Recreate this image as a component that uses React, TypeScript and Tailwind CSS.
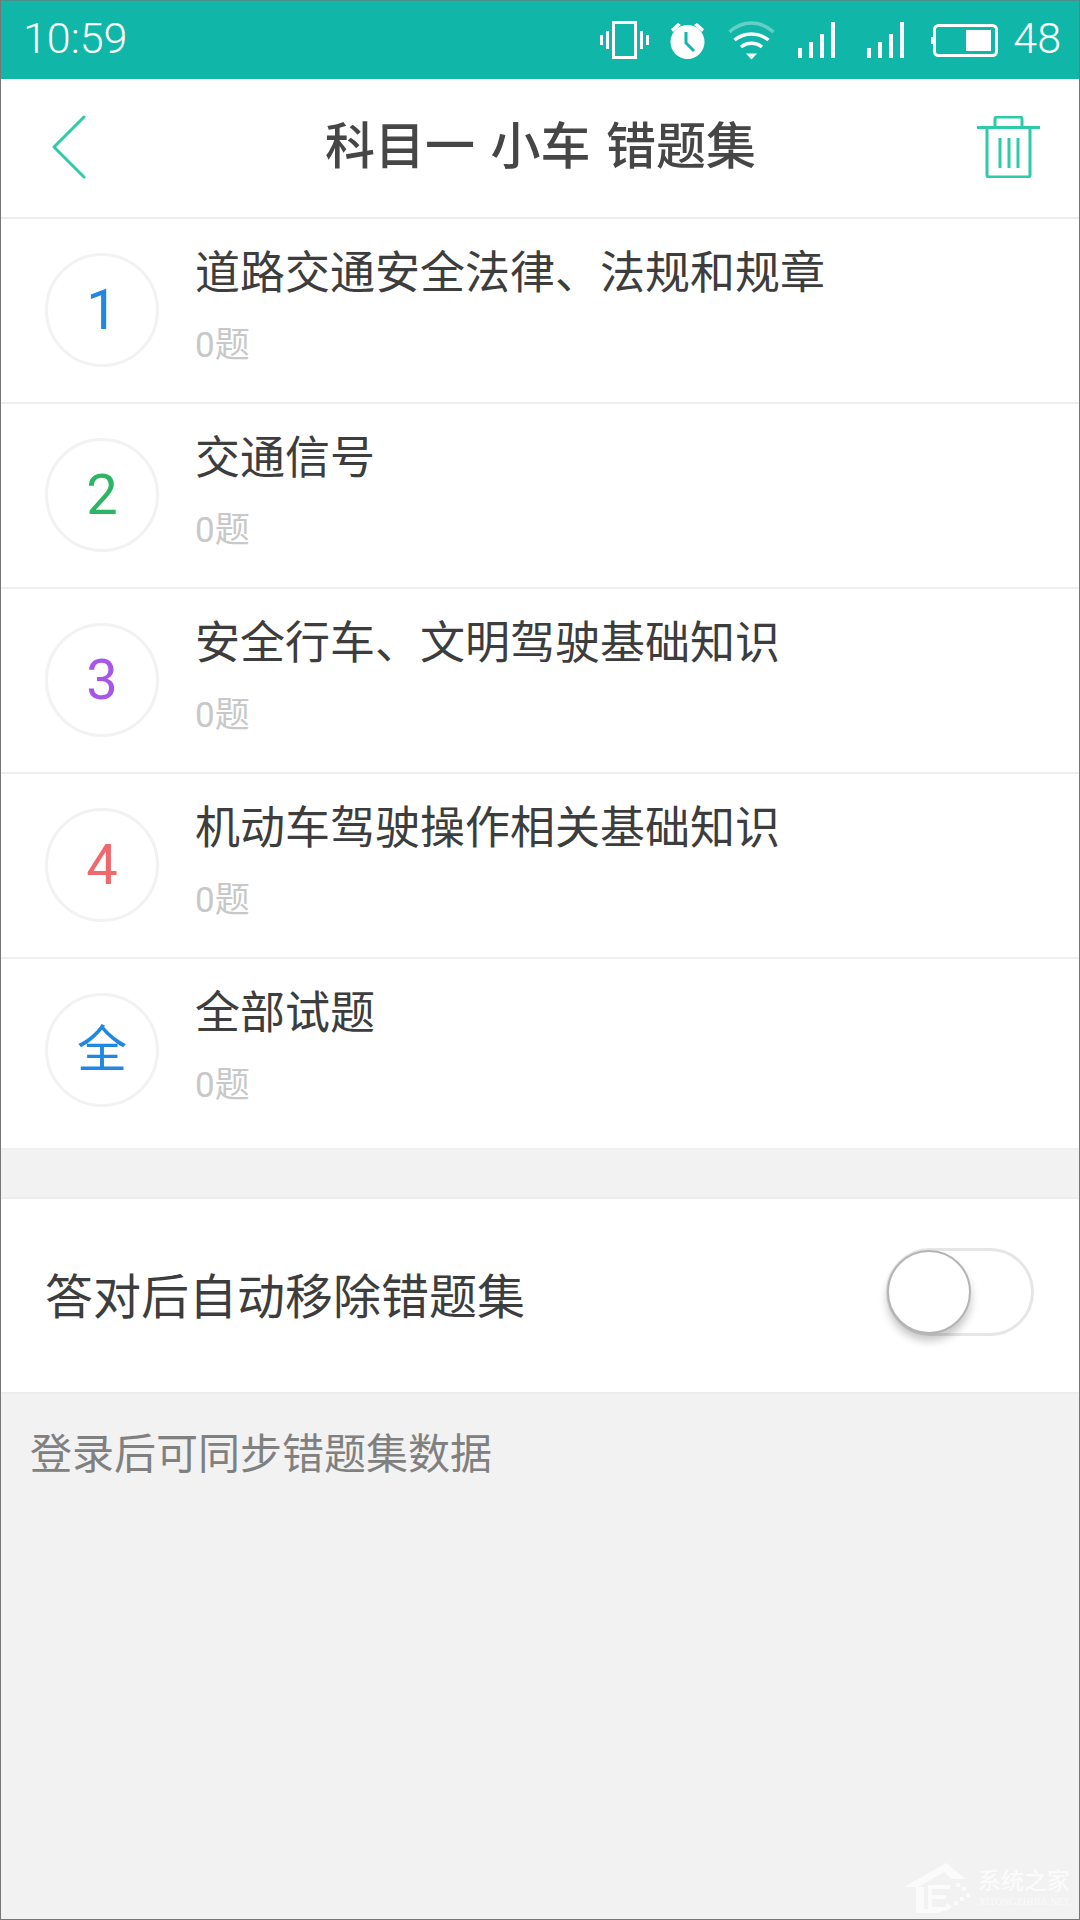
const cjk = "font-['Roboto','Noto_Sans_CJK_SC',sans-serif]";

const items = [
  { mark: "1", color: "text-[#2088e2] text-[56px]", title: "道路交通安全法律、法规和规章" },
  { mark: "2", color: "text-[#2cb564] text-[56px]", title: "交通信号" },
  { mark: "3", color: "text-[#a855e8] text-[56px]", title: "安全行车、文明驾驶基础知识" },
  { mark: "4", color: "text-[#f0686c] text-[56px]", title: "机动车驾驶操作相关基础知识" },
  { mark: "全", color: "text-[#2088e2] text-[50px]", title: "全部试题" },
];

function StatusIcons() {
  return (
    <div className="flex items-center text-white">
      <svg width="49" height="38" viewBox="0 0 49 38" fill="none" stroke="currentColor">
        <rect x="13.500" y="1.500" width="22" height="35" strokeWidth="3" />
        <path d="M7.500 10v18M41.500 10v18" strokeWidth="3" />
        <path d="M1.500 14v10M47.500 14v10" strokeWidth="3" />
      </svg>
      <svg className="ml-[21px]" width="35" height="38" viewBox="0 0 35 38">
        <circle cx="17.500" cy="21" r="17" fill="currentColor" />
        <path d="M1 8l7-6 3 2-8 7zM34 8l-7-6-3 2 8 7z" fill="currentColor" />
        <path d="M16 11v11l8 8" fill="none" stroke="#10b6a8" strokeWidth="3" />
      </svg>
      <svg className="ml-[23px]" width="47" height="39" viewBox="0 0 47 39" fill="none" stroke="currentColor" strokeWidth="3.5">
        <path d="M1.500 11c13-12 31-12 44 0" opacity="0.35" />
        <path d="M6.500 19c10-8 24-8 34 0" />
        <path d="M13 26c6-5 15-5 21 0" />
        <path d="M18 32.500h11l-5.500 6z" fill="currentColor" stroke="none" />
      </svg>
      <Signal className="ml-[23px]" />
      <Signal className="ml-[22px]" />
      <svg className="ml-[17px]" width="67" height="33" viewBox="0 0 67 33" fill="none">
        <rect x="3.500" y="1.500" width="62" height="30" rx="4" stroke="currentColor" strokeWidth="3" />
        <rect x="0" y="13" width="2" height="7" fill="currentColor" />
        <rect x="35" y="6" width="25" height="21" fill="currentColor" />
      </svg>
      <span className="mb-[3px] ml-[15px] font-['Roboto',sans-serif] text-[43px] font-light leading-none">48</span>
    </div>
  );
}

function Signal({ className }: { className: string }) {
  return (
    <svg className={className} width="47" height="36" viewBox="0 0 47 36" fill="currentColor">
      <rect x="0" y="26" width="4" height="10" />
      <rect x="11" y="20" width="4" height="16" />
      <rect x="22" y="12" width="4" height="24" />
      <rect x="33" y="0" width="4" height="36" />
    </svg>
  );
}

function Row({ mark, color, title, last }: { mark: string; color: string; title: string; last?: boolean }) {
  return (
    <div className={`flex items-start border-b-2 border-[#efefef] pl-[44px] ${last ? "h-[191px]" : "h-[185px]"}`}>
      <div className={`mt-[34px] flex h-[114px] w-[114px] shrink-0 items-center justify-center rounded-full border-[3px] border-[#f2f2f2] leading-none ${color}`}>
        {mark}
      </div>
      <div className="ml-[36px] pt-[25px]">
        <div className="text-[45px] leading-[60px] text-[#3d3d3d]">{title}</div>
        <div className="mt-[22px] text-[35px] leading-[40px] text-[#c8c8c8]">0题</div>
      </div>
    </div>
  );
}

export default function App() {
  return (
    <div className={`relative flex h-[1920px] w-[1080px] flex-col overflow-hidden border-x border-b border-[#777] bg-[#f2f2f2] ${cjk}`}>
      <div className="flex h-[79px] shrink-0 items-center justify-between border-t border-[#4a8f8a] bg-[#10b6a8] pl-[22px] pr-[18px]">
        <span className="mb-[3px] font-['Roboto',sans-serif] text-[43px] font-light leading-none text-white">10:59</span>
        <StatusIcons />
      </div>

      <div className="flex h-[140px] shrink-0 items-center justify-between border-b-2 border-[#ececec] bg-white pl-[51px] pr-[39px]">
        <svg className="mb-[2px]" width="34" height="64" viewBox="0 0 34 64" fill="none" stroke="#2fcaa6" strokeWidth="3" strokeLinecap="round" strokeLinejoin="round">
          <path d="M32 2L2 32l30 30" />
        </svg>
        <div className="mb-[2px] ml-[18px] text-[50px] font-medium leading-none text-[#464646] [word-spacing:3px]">科目一 小车 错题集</div>
        <svg className="mb-[2px]" width="63" height="62" viewBox="0 0 63 62" fill="none" stroke="#2fcaa6" strokeWidth="3">
          <path d="M0 11.500h63" />
          <path d="M18 10V3a2 2 0 0 1 2-2h23a2 2 0 0 1 2 2v7" />
          <path d="M10 12v47a2 2 0 0 0 2 2h39a2 2 0 0 0 2-2V12" />
          <path d="M23 22v30M32 22v30M41 22v30" />
        </svg>
      </div>

      <div className="shrink-0 bg-white">
        {items.map((item, i) => (
          <Row key={item.mark} {...item} last={i === items.length - 1} />
        ))}
      </div>

      <div className="mt-[47px] flex h-[197px] shrink-0 items-center justify-between border-y-2 border-[#ececec] bg-white pl-[44px] pr-[45px]">
        <span className="mt-[4px] text-[48px] leading-none text-[#3d3d3d]">答对后自动移除错题集</span>
        <div className="mb-[8px] flex h-[88px] w-[148px] items-center rounded-full border-[3px] border-[#e6e6e6]">
          <div className="ml-[-2px] h-[84px] w-[84px] rounded-full border-2 border-[#b4b4b4] bg-white shadow-[0_7px_8px_rgba(0,0,0,0.22)]" />
        </div>
      </div>

      <div className="pl-[29px] pt-[31px] text-[42px] leading-[60px] text-[#808080]">登录后可同步错题集数据</div>

      <div className="absolute bottom-[6px] right-[9px] flex items-center text-[#fbfbfb]">
        <svg width="72" height="50" viewBox="0 0 72 50" fill="currentColor">
          <path d="M0 24L42 0l20 16H48L40 9 14 24h6v22h20l-4 4H12V24z" />
          <path d="M24 22h22v4H28v6h14v4H28v8h14v-4l6 4-6 4H24zM52 20h4v4h-4zM58 24h4v4h-4zM62 30h4v4h-4zM56 34h4v4h-4zM50 38h4v4h-4z" />
        </svg>
        <div className="ml-[2px] flex flex-col items-center">
          <span className="text-[23px] font-medium leading-[28px]">系统之家</span>
          <span className="font-['Liberation_Serif',serif] text-[10px] leading-[12px]">XITONGZHIJIA.NET</span>
        </div>
      </div>
    </div>
  );
}
